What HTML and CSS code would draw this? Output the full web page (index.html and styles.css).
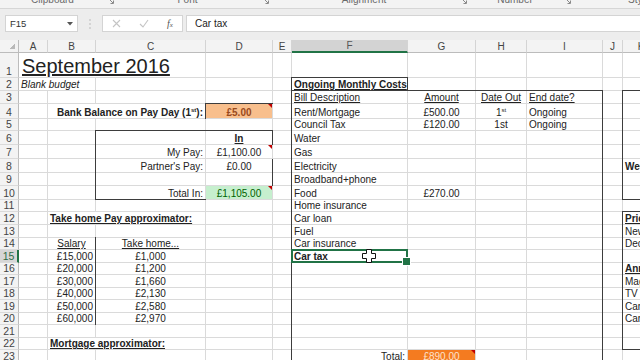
FILE: index.html
```html
<!DOCTYPE html>
<html lang="en">
<head>
<meta charset="UTF-8">
<title>September 2016 - Budget</title>
<link rel="stylesheet" href="styles.css">
</head>
<body>

<!-- Ribbon group labels (cut off at the top) -->
<div class="ribbon">
  <span>Clipboard</span>
  <span class="launch"><svg width="7" height="7" viewBox="0 0 7 7"><path d="M.5 3V.5H3M6.5 3.5v3h-3M2 2l4 4" fill="none" stroke="#8a8a8a"/></svg></span>
  <span>Font</span>
  <span class="launch"><svg width="7" height="7" viewBox="0 0 7 7"><path d="M.5 3V.5H3M6.5 3.5v3h-3M2 2l4 4" fill="none" stroke="#8a8a8a"/></svg></span>
  <span>Alignment</span>
  <span class="launch"><svg width="7" height="7" viewBox="0 0 7 7"><path d="M.5 3V.5H3M6.5 3.5v3h-3M2 2l4 4" fill="none" stroke="#8a8a8a"/></svg></span>
  <span>Number</span>
  <span class="launch"><svg width="7" height="7" viewBox="0 0 7 7"><path d="M.5 3V.5H3M6.5 3.5v3h-3M2 2l4 4" fill="none" stroke="#8a8a8a"/></svg></span>
  <span></span>
  <span class="left">Styles</span>
</div>

<!-- Name box + formula bar -->
<div class="formula-bar">
  <div class="name-box">
    <span>F15</span>
    <svg width="6" height="4" viewBox="0 0 6 4"><path d="M0 0h6L3 3.5z" fill="#555"/></svg>
  </div>
  <div class="grip">
    <svg width="2" height="10" viewBox="0 0 2 10"><circle cx="1" cy="1" r=".8" fill="#b5b5b5"/><circle cx="1" cy="5" r=".8" fill="#b5b5b5"/><circle cx="1" cy="9" r=".8" fill="#b5b5b5"/></svg>
  </div>
  <div class="fx-buttons">
    <svg width="9" height="9" viewBox="0 0 9 9"><path d="M1 1l7 7M8 1L1 8" stroke="#c4c4c4" stroke-width="1.1"/></svg>
    <svg width="10" height="9" viewBox="0 0 10 9"><path d="M1 5l3 3 5-7" fill="none" stroke="#c4c4c4" stroke-width="1.1"/></svg>
    <span class="fx">f<small>x</small></span>
  </div>
  <div class="formula-input">Car tax</div>
</div>

<!-- Worksheet -->
<div class="sheet">
  <div class="cells">
    <!-- column headers -->
    <div class="corner"></div>
    <div class="ch">A</div><div class="ch">B</div><div class="ch">C</div><div class="ch">D</div><div class="ch">E</div>
    <div class="ch sel">F</div><div class="ch">G</div><div class="ch">H</div><div class="ch">I</div><div class="ch">J</div><div class="ch">K</div>

    <!-- 1 -->
    <div class="rh">1</div>
    <div class="title span3">September 2016</div>
    <div></div><div></div><div></div><div></div><div></div><div></div><div></div><div></div>

    <!-- 2 -->
    <div class="rh">2</div>
    <div class="i span2">Blank budget</div>
    <div></div><div></div><div></div>
    <div class="b u">Ongoing Monthly Costs</div>
    <div></div><div></div><div></div><div></div><div></div>

    <!-- 3 -->
    <div class="rh">3</div>
    <div></div><div></div><div></div><div></div><div></div>
    <div class="u">Bill Description</div>
    <div class="u c">Amount</div>
    <div class="u c">Date Out</div>
    <div class="u">End date?</div>
    <div></div><div></div>

    <!-- 4 -->
    <div class="rh">4</div>
    <div></div>
    <div class="b r span2"><span>Bank Balance on Pay Day (1<sup>st</sup>):</span></div>
    <div class="b c orange note">£5.00</div>
    <div></div>
    <div>Rent/Mortgage</div>
    <div class="c">£500.00</div>
    <div class="c"><span>1<sup>st</sup></span></div>
    <div>Ongoing</div>
    <div></div><div></div>

    <!-- 5 -->
    <div class="rh">5</div>
    <div></div><div></div><div></div><div></div><div></div>
    <div>Council Tax</div>
    <div class="c">£120.00</div>
    <div class="c">1st</div>
    <div>Ongoing</div>
    <div></div><div></div>

    <!-- 6 -->
    <div class="rh">6</div>
    <div></div><div></div><div></div>
    <div class="b u c">In</div>
    <div></div>
    <div>Water</div>
    <div></div><div></div><div></div><div></div><div></div>

    <!-- 7 -->
    <div class="rh">7</div>
    <div></div><div></div>
    <div class="r">My Pay:</div>
    <div class="c note">£1,100.00</div>
    <div></div>
    <div>Gas</div>
    <div></div><div></div><div></div><div></div><div></div>

    <!-- 8 -->
    <div class="rh">8</div>
    <div></div><div></div>
    <div class="r">Partner's Pay:</div>
    <div class="c">£0.00</div>
    <div></div>
    <div>Electricity</div>
    <div></div><div></div><div></div><div></div>
    <div class="b">Weekly costs</div>

    <!-- 9 -->
    <div class="rh">9</div>
    <div></div><div></div><div></div><div></div><div></div>
    <div>Broadband+phone</div>
    <div></div><div></div><div></div><div></div><div></div>

    <!-- 10 -->
    <div class="rh">10</div>
    <div></div><div></div>
    <div class="r">Total In:</div>
    <div class="c green note">£1,105.00</div>
    <div></div>
    <div>Food</div>
    <div class="c">£270.00</div>
    <div></div><div></div><div></div><div></div>

    <!-- 11 -->
    <div class="rh">11</div>
    <div></div><div></div><div></div><div></div><div></div>
    <div>Home insurance</div>
    <div></div><div></div><div></div><div></div><div></div>

    <!-- 12 -->
    <div class="rh">12</div>
    <div></div>
    <div class="b u span2">Take home Pay approximator:</div>
    <div></div><div></div>
    <div>Car loan</div>
    <div></div><div></div><div></div><div></div>
    <div class="b u">Price rises</div>

    <!-- 13 -->
    <div class="rh">13</div>
    <div></div><div></div><div></div><div></div><div></div>
    <div>Fuel</div>
    <div></div><div></div><div></div><div></div>
    <div>New car</div>

    <!-- 14 -->
    <div class="rh">14</div>
    <div></div>
    <div class="u c">Salary</div>
    <div class="u c">Take home...</div>
    <div></div><div></div>
    <div>Car insurance</div>
    <div></div><div></div><div></div><div></div>
    <div>Decorating</div>

    <!-- 15 -->
    <div class="rh sel">15</div>
    <div></div>
    <div class="r">£15,000</div>
    <div class="c">£1,000</div>
    <div></div><div></div>
    <div class="b">Car tax</div>
    <div></div><div></div><div></div><div></div><div></div>

    <!-- 16 -->
    <div class="rh">16</div>
    <div></div>
    <div class="r">£20,000</div>
    <div class="c">£1,200</div>
    <div></div><div></div><div></div><div></div><div></div><div></div><div></div>
    <div class="b u">Annual costs</div>

    <!-- 17 -->
    <div class="rh">17</div>
    <div></div>
    <div class="r">£30,000</div>
    <div class="c">£1,660</div>
    <div></div><div></div><div></div><div></div><div></div><div></div><div></div>
    <div>Magazines</div>

    <!-- 18 -->
    <div class="rh">18</div>
    <div></div>
    <div class="r">£40,000</div>
    <div class="c">£2,130</div>
    <div></div><div></div><div></div><div></div><div></div><div></div><div></div>
    <div>TV licence</div>

    <!-- 19 -->
    <div class="rh">19</div>
    <div></div>
    <div class="r">£50,000</div>
    <div class="c">£2,580</div>
    <div></div><div></div><div></div><div></div><div></div><div></div><div></div>
    <div>Car service</div>

    <!-- 20 -->
    <div class="rh">20</div>
    <div></div>
    <div class="r">£60,000</div>
    <div class="c">£2,970</div>
    <div></div><div></div><div></div><div></div><div></div><div></div><div></div>
    <div>Car MOT</div>

    <!-- 21 -->
    <div class="rh">21</div>
    <div></div><div></div><div></div><div></div><div></div><div></div><div></div><div></div><div></div><div></div><div></div>

    <!-- 22 -->
    <div class="rh">22</div>
    <div></div>
    <div class="b u span2">Mortgage approximator:</div>
    <div></div><div></div><div></div><div></div><div></div><div></div><div></div><div></div>

    <!-- 23 -->
    <div class="rh">23</div>
    <div></div><div></div><div></div><div></div><div></div>
    <div class="r">Total:</div>
    <div class="c total note">£890.00</div>
    <div></div><div></div><div></div><div></div>
  </div>

  <!-- range borders and selection, laid on the same grid -->
  <div class="overlay">
    <div class="frame box-ongoing"></div>
    <div class="frame box-bills"></div>
    <div class="frame box-bank"></div>
    <div class="frame box-in"></div>
    <div class="frame box-salary"></div>
    <div class="frame box-weekly"></div>
    <div class="frame box-price"></div>
    <div class="selection">
      <svg class="cursor" width="14" height="14" viewBox="0 0 14 14"><path d="M4.5 .5h5v4h4v5h-4v4h-5v-4h-4v-5h4z" fill="#fff" stroke="#111"/></svg>
    </div>
  </div>
</div>

</body>
</html>
```

FILE: styles.css
```css
* { margin: 0; padding: 0; box-sizing: border-box; }
:root {
  --cols: 19px 29px 48px 110px 67px 19px 116px 68px 51px 76px 20px 37px;
  --rows: 13px 25px 13px 13px 15px 12px 14px 14px 14px 13px 14px 12px 13px 13px 12px 13px 12px 13px 12px 13px 12px 13px 12px 13px;
}
body { width: 640px; height: 360px; overflow: hidden; background: #fff; font-family: "Liberation Sans", Arial, sans-serif; color: #222; }

/* ribbon */
.ribbon { height: 9px; background: #f3f3f3; border-bottom: 1px solid #d6d6d6; overflow: hidden; display: grid; grid-template-columns: 105px 10px 145px 10px 188px 10px 94px 10px 56px 1fr; font-size: 10px; color: #6a6a6a; }
.ribbon span { line-height: 10px; margin-top: -5px; text-align: center; }
.ribbon .launch { margin-top: -3px; line-height: 0; }
.ribbon .left { text-align: left; }

/* formula bar */
.formula-bar { height: 31px; background: #ededed; display: flex; align-items: flex-start; padding: 6px 0 0 5px; }
.name-box { width: 73px; height: 17px; background: #fff; border: 1px solid #d4d4d4; display: flex; align-items: center; justify-content: space-between; padding: 0 4px; font-size: 9.5px; color: #333; }
.grip { width: 24px; height: 17px; display: flex; align-items: center; justify-content: center; }
.fx-buttons { width: 81px; height: 17px; background: #fff; border: 1px solid #d4d4d4; display: flex; align-items: center; justify-content: space-around; margin-right: 3px; }
.fx { font-family: "Liberation Serif", serif; font-style: italic; font-size: 10px; color: #555; }
.fx small { font-size: 7px; }
.formula-input { flex: 1; height: 17px; background: #fff; border: 1px solid #d4d4d4; border-right: none; padding-left: 8px; font-size: 10px; color: #222; display: flex; align-items: center; }

/* sheet */
.sheet { display: grid; }
.cells, .overlay { grid-area: 1 / 1; display: grid; grid-template-columns: var(--cols); grid-template-rows: var(--rows); grid-auto-rows: 13px; }
.cells { font-size: 10px; line-height: 11px; }
.cells > div { border-right: 1px solid #dadada; border-bottom: 1px solid #dadada; display: flex; align-items: flex-end; padding: 0 2px; white-space: nowrap; }
.cells > .corner { background: #f3f3f3 linear-gradient(135deg, transparent 50%, #b9b9b9 50%) no-repeat right 3px bottom 3px / 6px 6px; border-right-color: #bcbcbc; border-bottom-color: #bcbcbc; }
.cells > .ch { background: #f3f3f3; border-right-color: #d4d4d4; border-bottom-color: #bcbcbc; justify-content: center; align-items: center; padding: 0; font-size: 10px; color: #444; }
.cells > .ch.sel { background: #d3d3d3; border-bottom: 2px solid #217346; color: #555; }
.cells > .rh { background: #f3f3f3; border-right-color: #bcbcbc; justify-content: center; padding: 0; font-size: 10.5px; line-height: 12px; color: #444; }
.cells > .rh.sel { background: #d6d6d6; border-right: 2px solid #217346; color: #2e6b45; }

.title { font-size: 20px; line-height: 22px; text-decoration: underline; }
.cells > .title { padding-left: 3px; }
.b { font-weight: bold; }
.u { text-decoration: underline; }
.i { font-style: italic; }
.c { justify-content: center; }
.r { justify-content: flex-end; }
.span2 { grid-column: span 2; }
.span3 { grid-column: span 3; }
sup { font-size: 6px; line-height: 0; vertical-align: 4px; }

.orange { background: #f8bf8d; color: #9a4a1c; }
.green { background: #c6efce; color: #006100; }
.total { background: #f47b20; color: #fde2cc; }
.note { position: relative; }
.note::after { content: ""; position: absolute; top: 0; right: 0; border-left: 4px solid transparent; border-top: 4px solid #c00000; }

/* range borders */
.overlay { pointer-events: none; }
.frame { border: 1px solid #3d3d3d; margin: -1px 0 0 -1px; }
.box-ongoing { grid-column: 7 / 8; grid-row: 3 / 4; border-bottom: none; }
.box-bills { grid-column: 7 / 11; grid-row: 4 / 30; border-bottom: none; }
.box-bank { grid-column: 5 / 6; grid-row: 5 / 6; }
.box-in { grid-column: 4 / 6; grid-row: 7 / 12; }
.box-salary { grid-column: 3 / 4; grid-row: 15 / 22; border-width: 0 1px 0 0; }
.box-weekly { grid-column: 12 / 13; grid-row: 4 / 12; }
.box-price { grid-column: 12 / 13; grid-row: 13 / 24; }

.selection { grid-column: 7 / 8; grid-row: 16 / 17; border: 2px solid #217346; margin: -1px 0 0 -1px; position: relative; }
.selection::after { content: ""; position: absolute; right: -5px; bottom: -5px; width: 7px; height: 7px; background: #217346; border: 1px solid #fff; }
.cursor { position: absolute; left: 69px; top: -2px; }
```
